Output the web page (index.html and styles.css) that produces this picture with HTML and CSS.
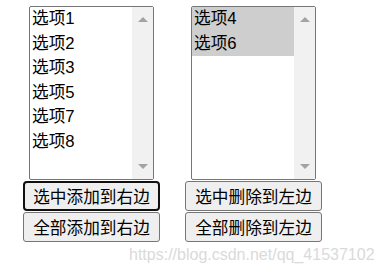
FILE: index.html
```html
<!DOCTYPE html>
<html lang="zh-CN">
<head>
  <meta charset="UTF-8" />
  <title>左右选择</title>
  <link rel="stylesheet" href="styles.css">
</head>
<body>
  <div class="panes">
    <div class="pane">
      <div class="listbox">
        <ul class="options">
          <li>选项1</li>
          <li>选项2</li>
          <li>选项3</li>
          <li>选项5</li>
          <li>选项7</li>
          <li>选项8</li>
        </ul>
        <div class="scrollbar">
          <span class="arrow up"></span>
          <span class="arrow down"></span>
        </div>
      </div>
      <button class="btn focused">选中添加到右边</button>
      <button class="btn">全部添加到右边</button>
    </div>
    <div class="pane">
      <div class="listbox">
        <ul class="options">
          <li class="selected">选项4</li>
          <li class="selected">选项6</li>
        </ul>
        <div class="scrollbar">
          <span class="arrow up"></span>
          <span class="arrow down"></span>
        </div>
      </div>
      <button class="btn">选中删除到左边</button>
      <button class="btn">全部删除到左边</button>
    </div>
  </div>
  <div class="watermark">https://blog.csdn.net/qq_41537102</div>
</body>
</html>
```

FILE: styles.css
```css
body {
  margin: 0;
  padding: 6px 0 0 23px;
  font-family: "Liberation Sans", "Noto Sans CJK SC", sans-serif;
  color: #000;
  background: #fff;
}
.panes {
  display: flex;
  gap: 25px;
}
.pane {
  display: flex;
  flex-direction: column;
  align-items: center;
  width: 137px;
}
.listbox {
  display: flex;
  width: 125px;
  height: 174px;
  box-sizing: border-box;
  border: 1px solid #767676;
  border-radius: 2px;
  background: #fff;
}
.options {
  flex: 1;
  margin: 0;
  padding: 0;
  list-style: none;
  font-size: 16.67px;
}
.options li {
  height: 24.5px;
  line-height: 24.5px;
  padding-left: 2px;
}
.options li.selected {
  background: #cecece;
}
.scrollbar {
  position: relative;
  width: 21px;
  background: #f1f1f1;
}
.arrow {
  position: absolute;
  left: 6px;
  width: 0;
  height: 0;
  border-left: 5px solid transparent;
  border-right: 5px solid transparent;
}
.arrow.up {
  top: 10px;
  border-bottom: 5px solid #a3a3a3;
}
.arrow.down {
  bottom: 10px;
  border-top: 5px solid #a3a3a3;
}
.btn {
  width: 137px;
  height: 30px;
  margin-top: 1px;
  padding: 0;
  box-sizing: border-box;
  font-family: "Liberation Sans", "Noto Sans CJK SC", sans-serif;
  font-size: 16.67px;
  color: #000;
  background: #efefef;
  border: 1px solid #767676;
  border-radius: 3px;
}
.btn.focused {
  border: 2px solid #101010;
  border-radius: 4px;
}
.watermark {
  position: absolute;
  left: 129px;
  top: 246px;
  font-size: 16px;
  color: #dadada;
  white-space: nowrap;
}
```
